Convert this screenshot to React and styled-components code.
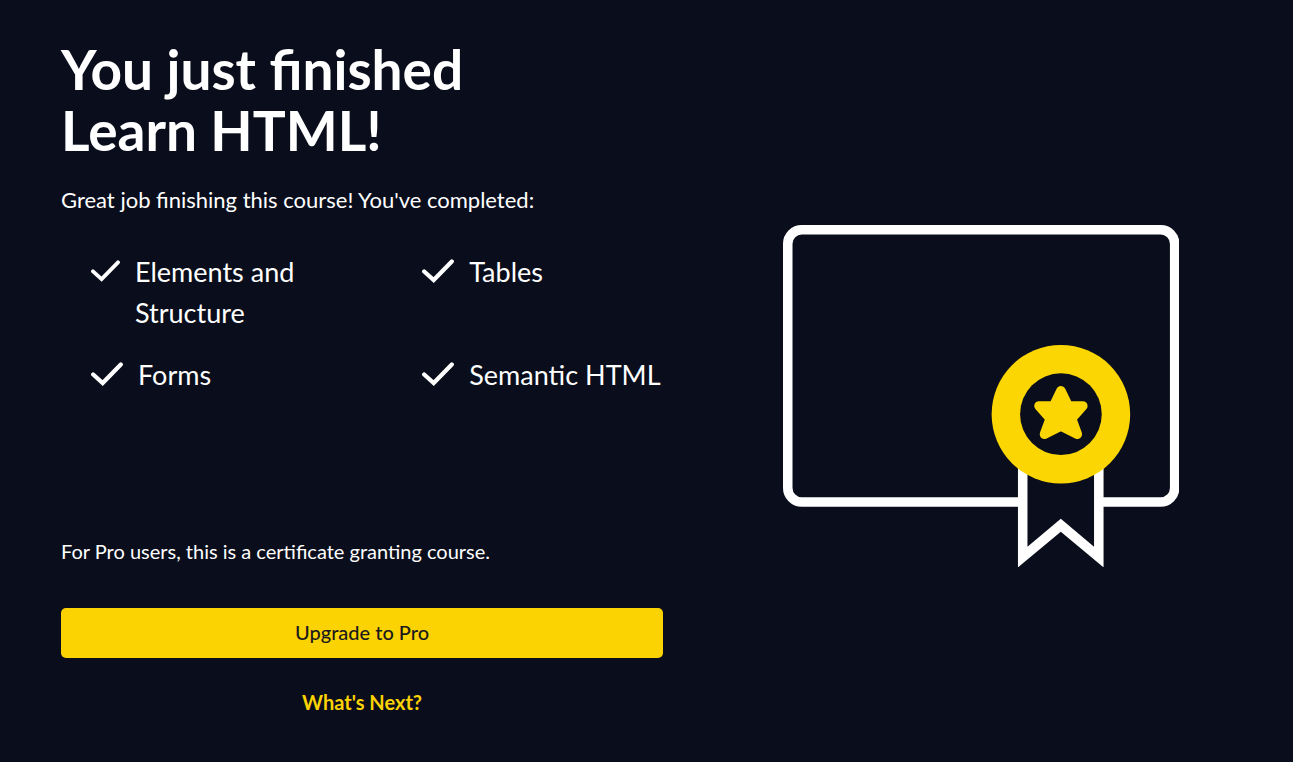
import React from "react";
import styled, { createGlobalStyle } from "styled-components";

const GlobalStyle = createGlobalStyle`
  *, *::before, *::after { box-sizing: border-box; }
  body {
    margin: 0;
    background: #0a0e1c;
    color: #ffffff;
    font-family: Lato, "Open Sans", sans-serif;
  }
`;

const Page = styled.main`
  display: grid;
  grid-template-columns: 6fr 5fr;
  column-gap: 67px;
  min-height: 100vh;
  padding: 39px 61px;
`;

const Summary = styled.section`
  display: flex;
  flex-direction: column;
`;

const Title = styled.h1`
  margin: 0;
  font-size: 55px;
  font-weight: 700;
  line-height: 61px;
`;

const Intro = styled.p`
  margin: 23px 0 0;
  font-size: 22px;
  line-height: 32px;
`;

const TopicList = styled.ul`
  display: grid;
  grid-template-columns: 11fr 8fr;
  row-gap: 21px;
  margin: 35px 0 0;
  padding: 0 0 0 30px;
  list-style: none;
`;

const Topic = styled.li`
  display: flex;
  align-items: flex-start;
  gap: 15px;
  font-size: 27px;
  line-height: 41px;
  white-space: nowrap;
`;

const Check = styled.svg`
  flex: none;
  width: ${({ $small }) => ($small ? 29 : 32)}px;
  height: 38px;
`;

const Note = styled.p`
  margin: 140px 0 0;
  font-size: 20px;
  line-height: 32px;
`;

const UpgradeButton = styled.button`
  height: 50px;
  margin: 41px 0 0;
  padding: 0 16px 2px;
  border: 0;
  border-radius: 5px;
  background: #fbd302;
  color: #1b1a1c;
  font: 500 20px/30px Lato, sans-serif;
  cursor: pointer;
`;

const NextLink = styled.a`
  align-self: center;
  margin-top: 28px;
  color: #fbd302;
  font-size: 20px;
  font-weight: 700;
  line-height: 32px;
  text-decoration: none;
`;

const Artwork = styled.div`
  display: flex;
  align-items: flex-start;
  justify-content: center;
  padding-top: 186px;
`;

const CertificateSvg = styled.svg`
  width: 79%;
  height: auto;
`;

const topics = [
  { lines: ["Elements and", "Structure"], small: true },
  { lines: ["Tables"] },
  { lines: ["Forms"] },
  { lines: ["Semantic HTML"] },
];

function CheckIcon({ small }) {
  return (
    <Check $small={small} viewBox="0 0 32 38" aria-hidden="true">
      <path d="M2.2 20.5 L11.7 29 L29.8 10.5" fill="none" stroke="#fff" strokeWidth="4.2" strokeLinecap="round" strokeLinejoin="miter" />
    </Check>
  );
}

function Certificate() {
  return (
    <CertificateSvg viewBox="0 0 396 342" role="img" aria-label="Certificate with a ribbon">
      <rect x="4.75" y="4.75" width="386.5" height="272" rx="14" fill="none" stroke="#fff" strokeWidth="9.5" />
      <path d="M234.7 230 H320.2 V342 L277.5 306.5 L234.7 342 Z" fill="#fff" />
      <path d="M244.2 230 H310.7 V321.5 L277.5 293.5 L244.2 321.5 Z" fill="#0a0e1c" />
      <circle cx="277.6" cy="189" r="69.2" fill="#fbd602" />
      <circle cx="277.6" cy="189" r="40.8" fill="#0a0e1c" />
      <path
        d="M277.6 165.5 L284.8 180.7 L299.5 180.7 L288.3 193.5 L294 209 L277.6 200.7 L261.2 209 L266.9 193.5 L255.7 180.7 L270.4 180.7 Z"
        fill="#fbd602"
        stroke="#fbd602"
        strokeWidth="9.5"
        strokeLinejoin="round"
      />
    </CertificateSvg>
  );
}

export default function App() {
  return (
    <>
      <GlobalStyle />
      <Page>
        <Summary>
          <Title>
            You just finished
            <br />
            Learn HTML!
          </Title>
          <Intro>Great job finishing this course! You've completed:</Intro>
          <TopicList>
            {topics.map(({ lines, small }) => (
              <Topic key={lines[0]}>
                <CheckIcon small={small} />
                <span>
                  {lines.map((line, i) => (
                    <React.Fragment key={line}>
                      {i > 0 && <br />}
                      {line}
                    </React.Fragment>
                  ))}
                </span>
              </Topic>
            ))}
          </TopicList>
          <Note>For Pro users, this is a certificate granting course.</Note>
          <UpgradeButton type="button">Upgrade to Pro</UpgradeButton>
          <NextLink href="#next">What's Next?</NextLink>
        </Summary>
        <Artwork>
          <Certificate />
        </Artwork>
      </Page>
    </>
  );
}
